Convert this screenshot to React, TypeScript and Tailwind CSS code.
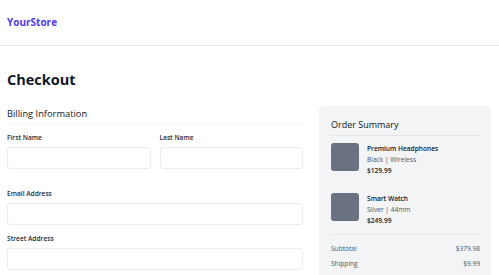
import React from "react";

const items = [
  { name: "Premium Headphones", detail: "Black | Wireless", price: "$129.99" },
  { name: "Smart Watch", detail: "Silver | 44mm", price: "$249.99" },
];

function Field({ label, className = "" }: { label: string; className?: string }) {
  return (
    <div className={className}>
      <label className="block text-[6.6px] leading-[10px] font-semibold text-gray-800">{label}</label>
      <div className="mt-[4px] h-[22px] rounded-[3px] border border-[#ececec] bg-white" />
    </div>
  );
}

export default function App() {
  return (
    <div className="h-[275px] overflow-hidden bg-white text-gray-900" style={{ fontFamily: '"Open Sans", "Noto Sans", sans-serif' }}>
      {/* Top bar */}
      <header className="flex h-[46px] items-center border-b border-gray-200 px-[7px]">
        <span className="text-[10px] font-bold text-indigo-600">YourStore</span>
      </header>

      <main className="px-[7px] pt-[24px]">
        <h1 className="text-[14.5px] leading-[20px] font-bold text-gray-900">Checkout</h1>

        <div className="mt-[16px] grid grid-cols-[296px_172px] gap-[16px]">
          {/* Billing form */}
          <section>
            <h2 className="border-b border-gray-100 pb-[2px] text-[9.3px] leading-[16px] font-medium text-gray-900">
              Billing Information
            </h2>
            <div className="mt-[8px] grid grid-cols-2 gap-[9px]">
              <Field label="First Name" />
              <Field label="Last Name" />
            </div>
            <Field label="Email Address" className="mt-[20px]" />
            <Field label="Street Address" className="mt-[9px]" />
          </section>

          {/* Order summary */}
          <aside className="h-[200px] rounded-[4px] bg-gray-100 pt-[12px] pl-[12px] pr-[11px]">
            <h2 className="border-b border-gray-200 pb-[3px] text-[9px] leading-[14px] font-medium text-gray-900">
              Order Summary
            </h2>
            <div className="mt-[7px] flex flex-col gap-[17px]">
              {items.map((item) => (
                <div key={item.name} className="flex gap-[8px]">
                  <div className="h-[28px] w-[28px] shrink-0 rounded-[3px] bg-gray-500" />
                  <div className="text-[6.6px] leading-[11px]">
                    <p className="font-semibold text-gray-900">{item.name}</p>
                    <p className="text-gray-600">{item.detail}</p>
                    <p className="font-semibold text-gray-900">{item.price}</p>
                  </div>
                </div>
              ))}
            </div>
            <div className="mt-[8px] border-t border-gray-200 pt-[6px] text-[6.6px] leading-[15px] text-gray-600">
              <div className="flex justify-between">
                <span>Subtotal</span>
                <span>$379.98</span>
              </div>
              <div className="flex justify-between">
                <span>Shipping</span>
                <span>$9.99</span>
              </div>
            </div>
          </aside>
        </div>
      </main>
    </div>
  );
}
